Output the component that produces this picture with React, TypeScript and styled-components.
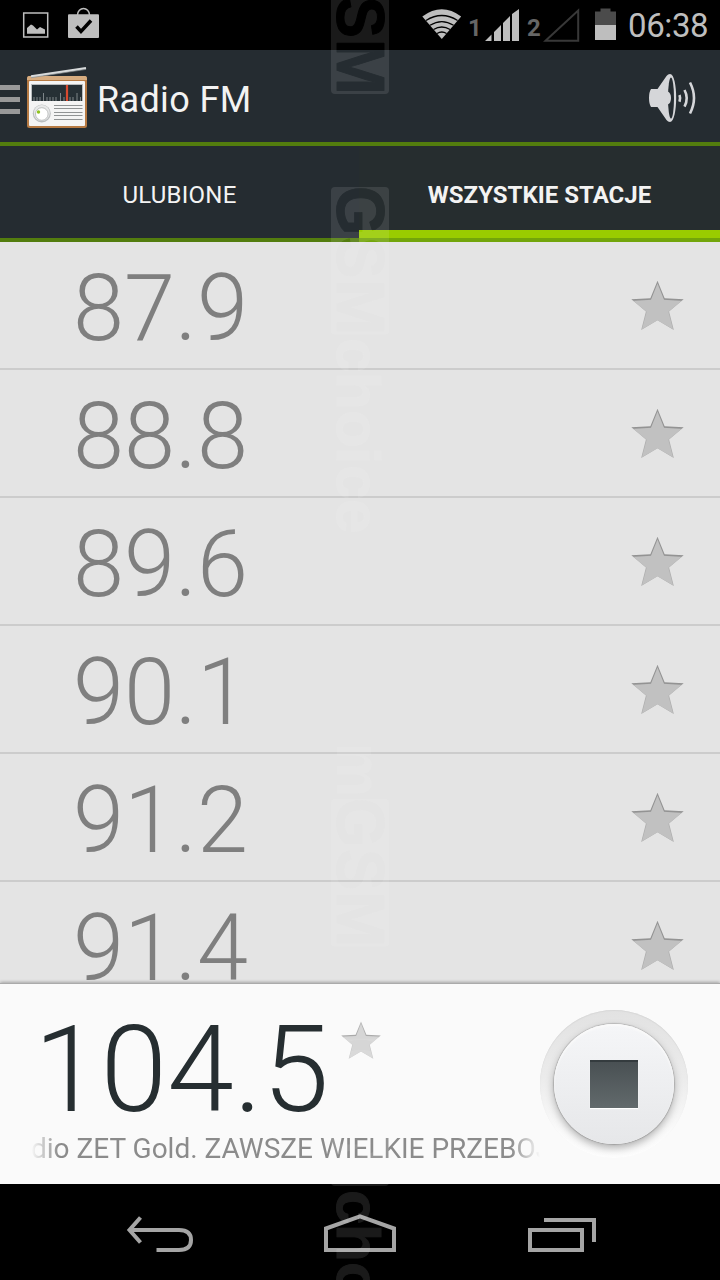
import React from "react";
import styled, { createGlobalStyle } from "styled-components";

const GlobalStyle = createGlobalStyle`
  * { box-sizing: border-box; }
  body { margin: 0; background: #000; }
`;

const GREEN_LINE = "#537d0e";

const Screen = styled.div`
  position: relative;
  width: 720px;
  height: 1280px;
  overflow: hidden;
  display: flex;
  flex-direction: column;
  background: #000;
  font-family: Roboto, "Liberation Sans", sans-serif;
`;

const StatusBar = styled.header`
  height: 50px;
  display: flex;
  align-items: center;
  background: #000;
`;

const StatusIcons = styled.svg`
  display: block;
  flex: none;
`;

const SimNumber = styled.span<{ $width: number }>`
  width: ${(p) => p.$width}px;
  padding-top: 6px;
  font-size: 24px;
  font-weight: 700;
  line-height: 28px;
  color: #666;
`;

const Spacer = styled.div`
  flex: 1;
`;

const Clock = styled.time`
  width: 92px;
  padding-top: 1px;
  font-size: 33px;
  line-height: 40px;
  letter-spacing: -0.4px;
  color: #bebebe;
  white-space: nowrap;
`;

const ActionBar = styled.div`
  height: 96px;
  display: flex;
  align-items: center;
  background: #252c31;
  border-bottom: 4px solid ${GREEN_LINE};
`;

const DrawerMark = styled.div`
  width: 20px;
  height: 29px;
  margin: 7px 6px 0 0;
  display: flex;
  flex-direction: column;
  justify-content: space-between;
`;

const DrawerLine = styled.i`
  height: 5px;
  background: #999;
`;

const RadioImage = styled.svg`
  margin-top: 4px;
`;

const Title = styled.h1`
  margin: 0 0 0 9px;
  padding-top: 8px;
  font-size: 36px;
  line-height: 42px;
  font-weight: 400;
  letter-spacing: 0.35px;
  color: #f3f3f3;
  flex: 1;
`;

const SpeakerIcon = styled.svg`
  margin: 4px 22px 0 0;
`;

const Tabs = styled.nav`
  height: 96px;
  display: flex;
`;

const Tab = styled.div<{ $active?: boolean }>`
  width: ${(p) => (p.$active ? 361 : 359)}px;
  display: flex;
  flex-direction: column;
  background: ${(p) => (p.$active ? "#262d2f" : "#252c31")};
  border-bottom: 4px solid ${(p) => (p.$active ? "#72a50a" : GREEN_LINE)};
  box-shadow: ${(p) => (p.$active ? "inset 0 -8px #99cc00" : "none")};
`;

const TabLabel = styled.span<{ $active?: boolean }>`
  margin: auto;
  padding-top: 5px;
  font-size: 24px;
  line-height: 28px;
  font-weight: ${(p) => (p.$active ? 700 : 400)};
  letter-spacing: ${(p) => (p.$active ? "0" : "0.25px")};
  color: #f3f3f3;
`;

const StationList = styled.ul`
  flex: 1;
  min-height: 0;
  margin: 0;
  padding: 0;
  overflow: hidden;
  list-style: none;
  background: #e4e4e4;
`;

const StationRow = styled.li`
  height: 128px;
  padding: 0 36.5px 0 73px;
  display: flex;
  align-items: center;
  justify-content: space-between;
  border-bottom: 2px solid #cccccc;
`;

const Frequency = styled.span`
  padding-top: 7px;
  font-size: 92px;
  line-height: 108px;
  font-weight: 300;
  color: #7f7f7f;
`;

const Player = styled.section`
  position: relative;
  height: 201px;
  padding-left: 32px;
  display: flex;
  background: #fafafa;
  border-top: 1px solid #aaa;
  box-shadow: 0 -1px 3px rgba(0, 0, 0, 0.28);
`;

const NowPlaying = styled.div`
  width: 508px;
`;

const CurrentLine = styled.div`
  height: 132px;
  display: flex;
  align-items: flex-start;
  padding-top: 25px;
`;

const CurrentFrequency = styled.span`
  width: 307px;
  margin-left: 2px;
  font-size: 120px;
  line-height: 122px;
  font-weight: 300;
  color: #262e31;
`;

const CurrentStar = styled.div`
  padding-top: 12px;
`;

const Ticker = styled.div`
  height: 40px;
  margin: 13px 0 0 -1px;
  overflow: hidden;
  display: flex;
  font-size: 28px;
  line-height: 40px;
  color: #8b8b8b;
  white-space: nowrap;
  mask-image: linear-gradient(90deg, transparent, #000 28px, #000 480px, transparent);
`;

const StopRing = styled.button`
  width: 148px;
  height: 148px;
  margin: 26px 0 0;
  padding: 14px;
  border: 0;
  border-radius: 50%;
  background: linear-gradient(#e2e2e2 0%, #ebebeb 45%, #fafafa 82%, #fdfdfd 100%);
  box-shadow: inset 0 1px 1px #d8d8d8;
`;

const StopDisc = styled.span`
  width: 120px;
  height: 120px;
  display: flex;
  align-items: center;
  justify-content: center;
  border-radius: 50%;
  background: linear-gradient(#f5f6f8, #e6e7e9);
  box-shadow: 0 0 1px 1px rgba(0, 0, 0, 0.16), 0 4px 9px rgba(0, 0, 0, 0.3), inset 0 2px 2px #fafafa;
`;

const StopSquare = styled.i`
  width: 48px;
  height: 48px;
  background: linear-gradient(#484f52, #626a6c);
  box-shadow: inset 0 2px #343b3e, 0 1px 1px #fff;
`;

const NavBar = styled.footer`
  height: 96px;
  padding: 4px 0 0 2px;
  display: flex;
  align-items: center;
  justify-content: center;
  background: #000;
`;

const NavIcon = styled.svg<{ $gap?: number }>`
  margin-left: ${(p) => p.$gap ?? 0}px;
  fill: none;
  stroke: #a5a5a5;
  stroke-width: 4;
`;

const WatermarkLayer = styled.svg`
  position: absolute;
  inset: 0;
  pointer-events: none;
  opacity: 0.1;
  font-family: "Liberation Sans", Arial, sans-serif;
  font-size: 69px;
  font-weight: 700;
`;

function Star({ size, light, id }: { size: number; light?: boolean; id: string }) {
  return (
    <svg width={size} height={(size * 50) / 52} viewBox="0 0 52 50" display="block">
      <defs>
        <linearGradient id={id} x1="0" y1="0" x2="0" y2="1">
          <stop offset="0" stopColor={light ? "#bdbdbd" : "#969696"} />
          <stop offset=".38" stopColor={light ? "#aaa" : "#929292"} />
          <stop offset=".45" stopColor={light ? "#cfcfcf" : "#b4b4b4"} />
          <stop offset="1" stopColor={light ? "#c4c4c4" : "#aaa"} />
        </linearGradient>
      </defs>
      <path
        d="M26 .7 33 17.800 51.700 19 37.400 31 42 49 26 39.600 10 49 14.600 31 .3 19 19 17.800Z"
        fill={`url(#${id})`}
      />
      <path
        d="M26 3.500 32.400 19.500 49.300 20.600 36.600 31.200 41.300 48.400 26 39.400 10.700 48.400 15.400 31.200 2.700 20.600 19.600 19.500Z"
        fill={light ? "#d6d6d6" : "#c1c1c1"}
      />
    </svg>
  );
}

function NotificationIcons() {
  return (
    <StatusIcons width="100" height="50" viewBox="0 0 100 50">
      <rect x="23.700" y="13" width="24" height="24" fill="none" stroke="#bebebe" strokeWidth="1.500" />
      <path d="M27 33.800V28l4-3.500 2 1 4 4 3-2.500 5 2.500v4.300Z" fill="#bebebe" />
      <path d="M77.500 15c0-4 3-6.500 6-6.500s6 2.500 6 6.500" fill="none" stroke="#bebebe" strokeWidth="1.500" />
      <path d="M69 14.300h29q1 0 1 1v21.700q0 1-1 1H69q-1 0-1-1V15.300q0-1 1-1Z" fill="#bebebe" />
      <path d="m76.500 26.500 4.500 5 10-11" fill="none" stroke="#000" strokeWidth="3.500" />
    </StatusIcons>
  );
}

function WifiIcon() {
  return (
    <StatusIcons width="46" height="50" viewBox="422 0 46 50">
      <path d="M422.300 16.500Q441.800 2 461.200 16.500L441.800 39Z" fill="#bebebe" />
      <g fill="none" stroke="#000" strokeWidth="1.300">
        <path d="M426 20.500q15.800-10 31.600 0" />
        <path d="M430 25.300q11.800-7.500 23.600 0" />
        <path d="M433.500 29.500q8.300-5 16.600 0" />
        <path d="M437 33.500q4.800-3 9.600 0" />
      </g>
    </StatusIcons>
  );
}

function SignalIcon() {
  return (
    <StatusIcons width="42" height="50" viewBox="485 0 42 50">
      <path
        d="M485 41l6.500-6.500V41ZM494 41V32l7-7V41ZM503 41V23l7-7V41ZM512 41V14l7-5V41Z"
        fill="#bebebe"
      />
    </StatusIcons>
  );
}

function EmptySignalIcon() {
  return (
    <StatusIcons width="51" height="50" viewBox="543 0 51 50">
      <path d="M545.500 40.700 578.200 10.500V40.700Z" fill="none" stroke="#383838" strokeWidth="2" />
    </StatusIcons>
  );
}

function BatteryIcon() {
  return (
    <StatusIcons width="34" height="50" viewBox="594 0 34 50">
      <path d="M595 25V11.500h5.500V8.500h10v3H616V25Z" fill="#4b4b4b" />
      <path d="M595 25h21v15h-21Z" fill="#bebebe" />
    </StatusIcons>
  );
}

function RadioIcon() {
  return (
    <RadioImage width="62" height="64" viewBox="26 66 62 64">
      <rect x="27" y="76" width="60" height="52" rx="2.500" fill="#b67a43" />
      <path d="M29 76h56q2 0 2 3v1H27v-1q0-3 2-3Z" fill="#d6ac80" />
      <path d="M31 76.500 86 68.200" stroke="#d7dadb" strokeWidth="2.300" />
      <path d="M31 77.700 86 69.400" stroke="#83888a" strokeWidth=".7" />
      <rect x="29" y="81" width="56" height="45" rx="1" fill="#f4f4f4" />
      <rect x="31" y="84" width="52" height="17" fill="#b9bcbd" />
      <rect x="32" y="85" width="50" height="16" fill="#263035" />
      <path
        d="M34 97v4M37 97v4M40 97v4M43.500 93v8M47 97v4M50 97v4M53 97v4M56 97v4M60.500 93v8M64 97v4M70 97v4M73 97v4M77 93v8M80.500 97v4"
        stroke="#7e8689"
        strokeWidth="1"
      />
      <path d="M67 85v16" stroke="#d94a2f" strokeWidth="2.200" />
      <path
        d="M54 105.500h28.500M54 108.500h28.500M54 112.500h28.500M54 115.500h28.500M54 119.500h28.500"
        stroke="#909394"
        strokeWidth="1"
      />
      <circle cx="41.800" cy="113.500" r="9" fill="#babdbe" />
      <circle cx="41.800" cy="113" r="8" fill="#e8e9e9" />
      <circle cx="41.800" cy="114" r="6.300" fill="#fff" stroke="#a7aaab" strokeWidth=".7" />
      <circle cx="38.500" cy="112" r="1.700" fill="#8fc31f" />
    </RadioImage>
  );
}

function Speaker() {
  return (
    <SpeakerIcon width="49" height="50" viewBox="649 73 49 50">
      <path
        d="M651 89h6.500l9-13q1.500-2 3.500-2c8.300 0 8.300 48 0 48q-2 0-3.500-2l-9-13H651q-2-3-2-9t2-9Z"
        fill="#d5d6d9"
      />
      <ellipse cx="671" cy="98" rx="3" ry="20.500" fill="#252c31" />
      <path d="M667.500 91.500q3.500 1 3.500 6.500t-3.500 6.500Z" fill="#d5d6d9" />
      <g fill="none" stroke="#d5d6d9">
        <path d="M679.500 95q1.300 3.300 0 6.700" strokeWidth="2.600" />
        <path d="M684.500 90q4.500 8.300 0 16.600" strokeWidth="2.600" />
        <path d="M690 82.500q8 15.700 0 31" strokeWidth="2.600" />
      </g>
    </SpeakerIcon>
  );
}

const badgeLetters = [
  { letter: "G", offset: -1, stretch: 0.92 },
  { letter: "S", offset: 50, stretch: 0.9 },
  { letter: "M", offset: 92.3, stretch: 0.98 },
];

function BadgeMark({ top, id }: { top: number; id: string }) {
  return (
    <>
      <mask id={id} maskUnits="userSpaceOnUse" x="320" y={top - 5} width="80" height="160">
        <rect x="331" y={top} width="58" height="147.500" rx="4" fill="#fff" />
        {badgeLetters.map(({ letter, offset, stretch }) => (
          <text
            key={letter}
            transform={`translate(336.500 ${top + offset}) rotate(90) scale(${stretch} 1)`}
            fill="#000"
            stroke="#000"
            strokeWidth="1"
            strokeLinejoin="round"
          >
            {letter}
          </text>
        ))}
      </mask>
      <rect x="331" y={top} width="58" height="147.500" fill="#fafafa" mask={`url(#${id})`} />
    </>
  );
}

function ChoiceMark({ top }: { top: number }) {
  return (
    <text
      transform={`translate(336.500 ${top}) rotate(90)`}
      x="3 37 75 112 130 164"
      fontSize="62"
      fill="#fafafa"
      stroke="#fafafa"
      strokeWidth="1"
      strokeLinejoin="round"
    >
      choice
    </text>
  );
}

function Watermark() {
  return (
    <WatermarkLayer width="720" height="1280" viewBox="0 0 720 1280">
      <BadgeMark id="badge-a" top={-53.5} />
      <BadgeMark id="badge-b" top={187} />
      <ChoiceMark top={335} />
      <text transform="translate(336.500 743) rotate(90)" fontSize="64" fill="#fafafa" textLength="54" lengthAdjust="spacingAndGlyphs">
        m
      </text>
      <BadgeMark id="badge-c" top={799} />
      <BadgeMark id="badge-d" top={1038.5} />
      <ChoiceMark top={1187} />
    </WatermarkLayer>
  );
}

const stations = ["87.9", "88.8", "89.6", "90.1", "91.2", "91.4"];

export default function App() {
  return (
    <Screen>
      <GlobalStyle />
      <StatusBar>
        <NotificationIcons />
        <Spacer />
        <WifiIcon />
        <SimNumber $width={17}>1</SimNumber>
        <SignalIcon />
        <SimNumber $width={16}>2</SimNumber>
        <EmptySignalIcon />
        <BatteryIcon />
        <Clock>06:38</Clock>
      </StatusBar>
      <ActionBar>
        <DrawerMark>
          <DrawerLine />
          <DrawerLine />
          <DrawerLine />
        </DrawerMark>
        <RadioIcon />
        <Title>Radio FM</Title>
        <Speaker />
      </ActionBar>
      <Tabs>
        <Tab>
          <TabLabel>ULUBIONE</TabLabel>
        </Tab>
        <Tab $active>
          <TabLabel $active>WSZYSTKIE STACJE</TabLabel>
        </Tab>
      </Tabs>
      <StationList>
        {stations.map((station, index) => (
          <StationRow key={station}>
            <Frequency>{station}</Frequency>
            <Star size={53} id={`star-${index}`} />
          </StationRow>
        ))}
      </StationList>
      <Player>
        <NowPlaying>
          <CurrentLine>
            <CurrentFrequency>104.5</CurrentFrequency>
            <CurrentStar>
              <Star size={40} light id="star-current" />
            </CurrentStar>
          </CurrentLine>
          <Ticker>dio ZET Gold. ZAWSZE WIELKIE PRZEBOJE</Ticker>
        </NowPlaying>
        <StopRing aria-label="Stop">
          <StopDisc>
            <StopSquare />
          </StopDisc>
        </StopRing>
      </Player>
      <NavBar>
        <NavIcon width="68" height="40" viewBox="126 1214 68 40">
          <path d="M156.500 1250H179q12 0 12-10t-12-10H130" />
          <path d="M140.500 1217.500 129.500 1230l11 12.500" />
        </NavIcon>
        <NavIcon $gap={130} width="72" height="40" viewBox="324 1214 72 40">
          <path d="M326 1250V1228.500L360 1216.300 394 1228.500V1250Z" />
        </NavIcon>
        <NavIcon $gap={132} width="68" height="40" viewBox="528 1214 68 40">
          <path d="M530 1230H582V1250H530ZM544 1220H594V1242" />
        </NavIcon>
      </NavBar>
      <Watermark />
    </Screen>
  );
}
